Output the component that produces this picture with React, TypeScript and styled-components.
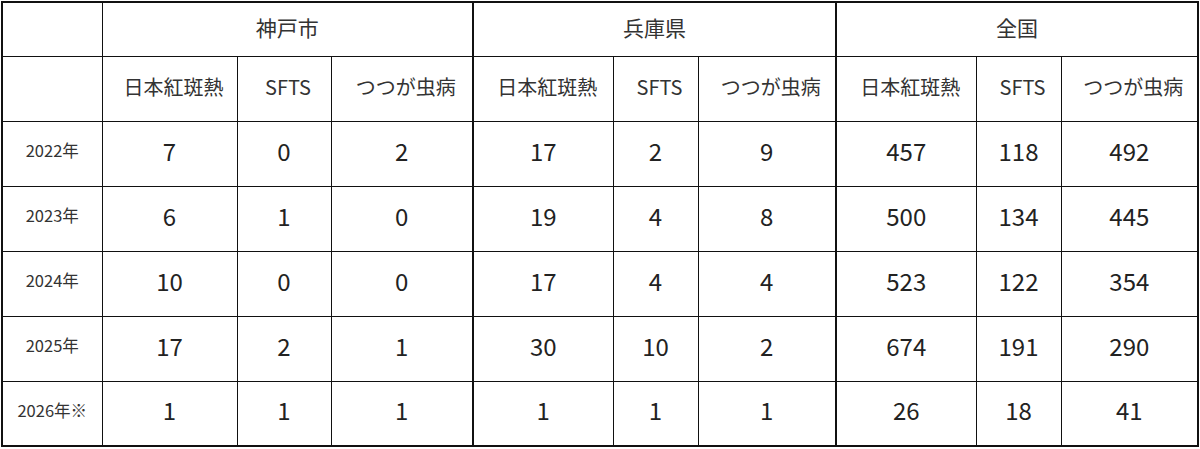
import React from "react";
import styled, { createGlobalStyle } from "styled-components";

const GlobalStyle = createGlobalStyle`
	html, body {
		margin: 0;
		padding: 0;
		background: #ffffff;
	}

	body {
		font-family: "Noto Sans CJK JP", "Noto Sans", sans-serif;
		color: #262626;
	}
`;

const Page = styled.div`
	padding: 1px 0 0 1px;
`;

const Table = styled.table`
	border-collapse: collapse;
	table-layout: fixed;
	width: 1197px;
	border: 2px solid #111;
`;

const Row = styled.tr<{ $h: number }>`
	height: ${(p) => p.$h}px;
`;

const Cell = styled.td<{ $thick?: boolean }>`
	border: 1px solid #111;
	border-left: ${(p) => (p.$thick ? "2px" : "1px")} solid #111;
	text-align: center;
	vertical-align: middle;
	padding: 0;
	line-height: 1;
	font-weight: 400;
`;

const GroupCell = styled(Cell)`
	font-size: 21px;
	color: #333;
	padding-bottom: 4px;
`;

const SubCell = styled(Cell)`
	font-size: 20px;
	color: #333;
	padding-left: 8px;
	padding-bottom: 4px;
`;

const YearCell = styled(Cell)`
	font-size: 16.5px;
	color: #333;
	padding-bottom: 6px;
`;

const NumCell = styled(Cell)`
	font-size: 24px;
	color: #222;
	padding-bottom: 6px;
`;

const widths = [100, 135, 94, 142, 140, 85, 138, 140, 85, 137];
const groups = ["神戸市", "兵庫県", "全国"];
const diseases = ["日本紅斑熱", "SFTS", "つつが虫病"];

const rows: { year: string; values: number[] }[] = [
	{ year: "2022年", values: [7, 0, 2, 17, 2, 9, 457, 118, 492] },
	{ year: "2023年", values: [6, 1, 0, 19, 4, 8, 500, 134, 445] },
	{ year: "2024年", values: [10, 0, 0, 17, 4, 4, 523, 122, 354] },
	{ year: "2025年", values: [17, 2, 1, 30, 10, 2, 674, 191, 290] },
	{ year: "2026年※", values: [1, 1, 1, 1, 1, 1, 26, 18, 41] },
];

const App = () => {
	return (
		<Page>
			<GlobalStyle />
			<Table>
				<colgroup>
					{widths.map((w, i) => (
						<col key={i} style={{ width: w }} />
					))}
				</colgroup>
				<thead>
					<Row $h={54}>
						<GroupCell as="th" />
						{groups.map((g, i) => (
							<GroupCell as="th" key={g} colSpan={3} $thick={i > 0}>
								{g}
							</GroupCell>
						))}
					</Row>
					<Row $h={65}>
						<SubCell as="th" />
						{groups.map((g, gi) =>
							diseases.map((d, di) => (
								<SubCell as="th" key={g + d} $thick={gi > 0 && di === 0}>
									{d}
								</SubCell>
							))
						)}
					</Row>
				</thead>
				<tbody>
					{rows.map((r) => (
						<Row $h={65} key={r.year}>
							<YearCell>{r.year}</YearCell>
							{r.values.map((v, i) => (
								<NumCell key={i} $thick={i === 3 || i === 6}>
									{v}
								</NumCell>
							))}
						</Row>
					))}
				</tbody>
			</Table>
		</Page>
	);
};

export default App;
